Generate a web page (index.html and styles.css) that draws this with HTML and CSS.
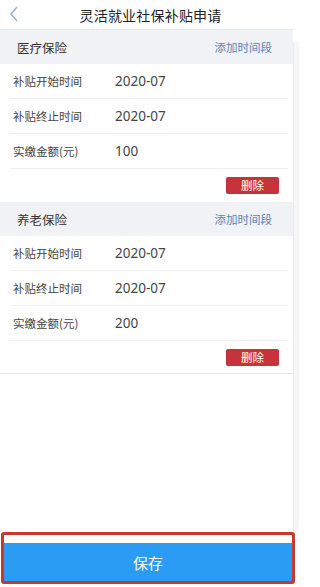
FILE: index.html
```html
<!DOCTYPE html>
<html lang="zh-CN">
<head>
<meta charset="utf-8">
<title>灵活就业社保补贴申请</title>
<link rel="stylesheet" href="styles.css">
</head>
<body>
<div class="page">
  <div class="top">
    <div class="content">
      <header class="navbar">
        <svg class="back" width="10" height="16" viewBox="0 0 10 16"><polyline points="8,1 2,8 8,15" fill="none" stroke="#8eb2d2" stroke-width="1.4"/></svg>
        <h1 class="title">灵活就业社保补贴申请</h1>
      </header>

      <section class="group">
        <div class="group-head">
          <span class="group-name">医疗保险</span>
          <span class="group-add">添加时间段</span>
        </div>
        <div class="row"><span class="label">补贴开始时间</span><span class="value">2020-07</span></div>
        <div class="row"><span class="label">补贴终止时间</span><span class="value">2020-07</span></div>
        <div class="row"><span class="label">实缴金额(元)</span><span class="value">100</span></div>
        <div class="actions"><button class="del">删除</button></div>
      </section>

      <section class="group last">
        <div class="group-head">
          <span class="group-name">养老保险</span>
          <span class="group-add">添加时间段</span>
        </div>
        <div class="row"><span class="label">补贴开始时间</span><span class="value">2020-07</span></div>
        <div class="row"><span class="label">补贴终止时间</span><span class="value">2020-07</span></div>
        <div class="row"><span class="label">实缴金额(元)</span><span class="value">200</span></div>
        <div class="actions"><button class="del">删除</button></div>
      </section>
    </div>
    <div class="rail"></div>
  </div>
  <footer class="footer">
    <button class="save">保存</button>
  </footer>
</div>
</body>
</html>
```
FILE: styles.css
```css
html, body {
  margin: 0;
  padding: 0;
  background: #ffffff;
}
body {
  font-family: "Noto Sans CJK SC", "Noto Sans", sans-serif;
  color: #333;
}
.page {
  width: 299px;
  height: 587px;
  display: flex;
  flex-direction: column;
  overflow: hidden;
}
.top {
  flex: 1;
  display: flex;
  min-height: 0;
}
.content {
  width: 293px;
  display: flex;
  flex-direction: column;
}
.rail {
  flex: 1;
  background: #f6f6f7;
  border-left: 1px solid #ececec;
  margin-top: 42px;
}
.navbar {
  height: 29px;
  border-bottom: 1px solid #e4e6ea;
  display: flex;
  align-items: center;
  justify-content: center;
  position: relative;
}
.back {
  position: absolute;
  left: 9px;
  top: 6px;
}
.title {
  margin: 0 0 0 8px;
  font-size: 14px;
  font-weight: normal;
  color: #222;
  letter-spacing: 0.2px;
}
.group-head {
  height: 34px;
  background: #f1f2f5;
  display: flex;
  align-items: center;
  justify-content: space-between;
  padding: 0 21px 0 17px;
}
.group-name {
  font-size: 12.5px;
  color: #333;
}
.group-add {
  font-size: 11.5px;
  color: #5586bb;
}
.row {
  height: 35px;
  margin: 0 5px 0 10px;
  padding-left: 3px;
  display: flex;
  align-items: center;
  border-bottom: 1px solid #f0f0f0;
  box-sizing: border-box;
}
.label {
  width: 102px;
  font-size: 11.5px;
  color: #444;
}
.value {
  font-family: "Noto Sans", "Liberation Sans", sans-serif;
  font-size: 13.5px;
  color: #444;
}
.actions {
  height: 33px;
  display: flex;
  justify-content: flex-end;
  align-items: flex-start;
  padding: 8px 14px 0 0;
  box-sizing: border-box;
}
.last .actions {
  border-bottom: 1px solid #e8e8e8;
}
.del {
  width: 53px;
  height: 17px;
  border: none;
  border-radius: 2px;
  background: #c5343a;
  color: #fff;
  font-family: "Noto Sans CJK SC", sans-serif;
  font-size: 11.5px;
  padding: 0;
  line-height: 17px;
}
.footer {
  margin: 0 4px 3px 1px;
  border: 3px solid #c8382f;
  border-radius: 3px;
  padding-top: 8px;
  background: #fff;
}
.save {
  display: block;
  width: 100%;
  height: 38px;
  border: none;
  background: #2a9cf3;
  color: #fff;
  font-family: "Noto Sans CJK SC", sans-serif;
  font-size: 15px;
  padding: 0;
}
```
